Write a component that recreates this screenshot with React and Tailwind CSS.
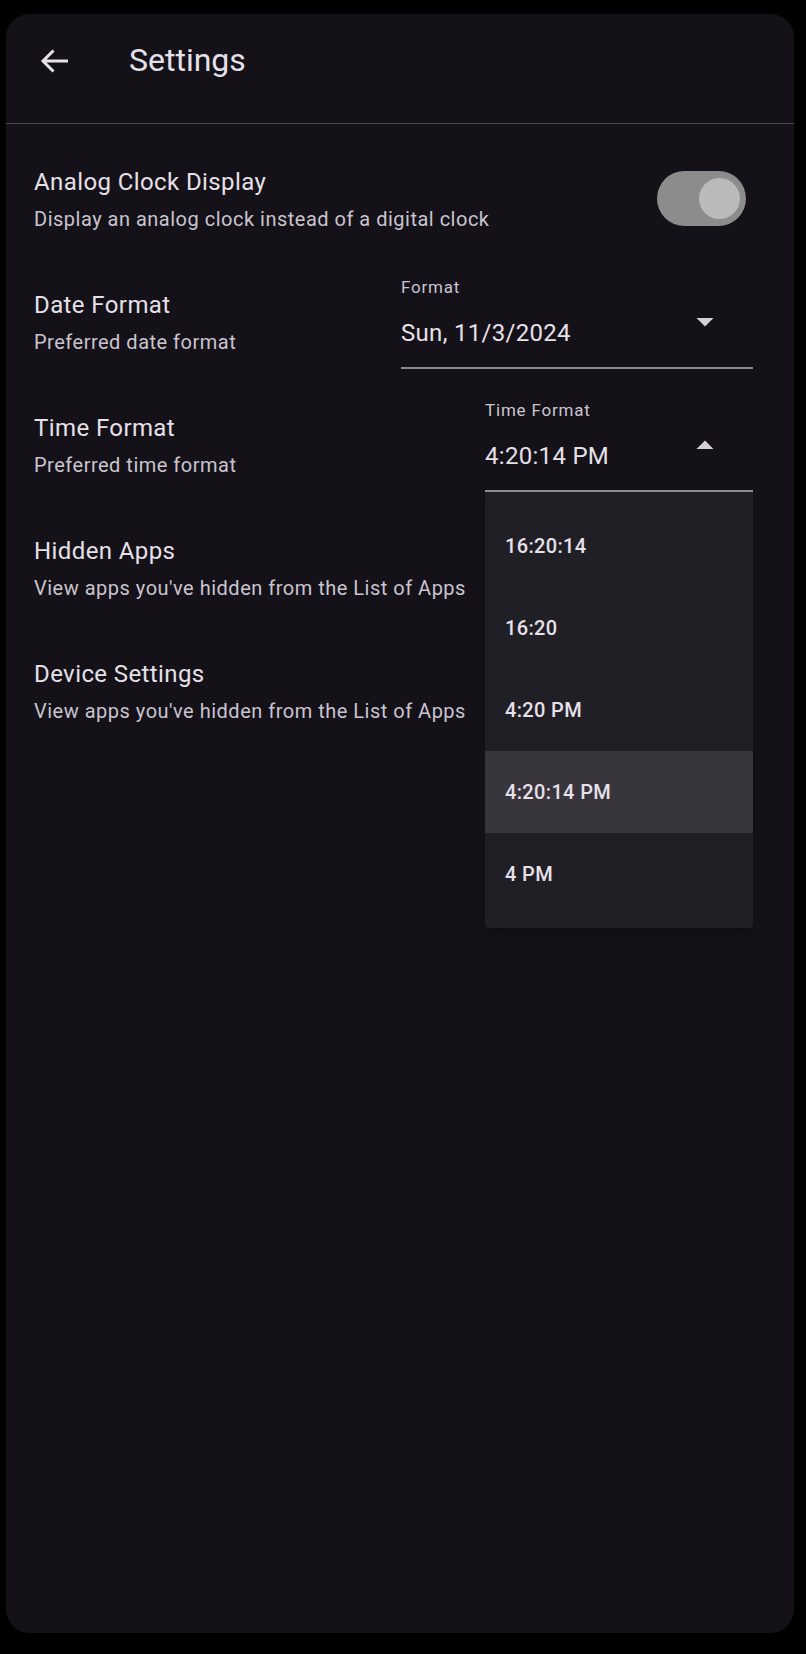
import React from 'react';

const rows = [
  { title: 'Analog Clock Display', subtitle: 'Display an analog clock instead of a digital clock', kind: 'toggle' },
  { title: 'Date Format', subtitle: 'Preferred date format', kind: 'date' },
  { title: 'Time Format', subtitle: 'Preferred time format', kind: 'time' },
  { title: 'Hidden Apps', subtitle: "View apps you've hidden from the List of Apps" },
  { title: 'Device Settings', subtitle: "View apps you've hidden from the List of Apps" },
];

const timeOptions = ['16:20:14', '16:20', '4:20 PM', '4:20:14 PM', '4 PM'];

const Caret = ({ up }) => (
  <svg width="24" height="24" viewBox="0 0 24 24" className="-mt-[9px] mr-[36px] shrink-0">
    {up ? <path d="M3.5 16 12 7.5 20.5 16z" fill="#d6d0dc" /> : <path d="M3.5 8 12 16.5 20.5 8z" fill="#d6d0dc" />}
  </svg>
);

const Select = ({ label, value, open, className }) => (
  <div className={`relative ${className}`}>
    <div className="text-[17px] leading-[20px] tracking-[0.8px] text-[#cac4d0]">{label}</div>
    <div className="mt-[22px] pb-[20px] flex items-start justify-between border-b-2 border-[#8f8c93]">
      <span className="text-[24px] leading-[28px] tracking-[0.3px] text-[#e6e0e9]">{value}</span>
      <Caret up={open} />
    </div>
    {open && (
      <div className="absolute left-0 right-0 top-full z-10 py-[13px] bg-[#211f26] rounded-b-[4px] shadow-lg">
        {timeOptions.map(opt => (
          <div
            key={opt}
            className={`h-[82px] px-5 flex items-center text-[20px] tracking-[0.35px] font-medium text-[#e6e0e9] ${opt === value ? 'bg-[#38353d]' : ''}`}
          >
            {opt}
          </div>
        ))}
      </div>
    )}
  </div>
);

const Toggle = () => (
  <div className="mr-[48px] mb-[2px] w-[89px] h-[55px] rounded-full bg-[#8c8c8c] flex items-center justify-end pr-[6px]">
    <div className="w-[41px] h-[41px] rounded-full bg-[#bababa]" />
  </div>
);

export default function App() {
  return (
    <div className="bg-black min-h-[1654px] pt-[14px] pl-[6px] pr-[12px] pb-[21px]" style={{ fontFamily: 'Roboto, "Noto Sans", sans-serif' }}>
      <div className="bg-[#141218] rounded-[24px] h-[1619px] flex flex-col">
        {/* top bar */}
        <div className="h-[110px] flex items-center border-b border-[#46444b]">
          <svg width="30" height="24" viewBox="0 0 30 24" className="ml-[34px] -mt-[16px]">
            <path d="M3 12H28M13.5 1.5 3 12l10.5 10.5" stroke="#e6e0e9" strokeWidth="3" fill="none" />
          </svg>
          <h1 className="ml-[59px] -mt-[18px] text-[32px] text-[#e6e0e9] font-normal">Settings</h1>
        </div>

        <div className="pt-[14px] pl-[28px]">
          {rows.map(row => (
            <div key={row.title} className="h-[123px] flex items-center justify-between">
              <div>
                <div className="text-[24px] leading-[30px] tracking-[0.4px] text-[#e6e0e9]">{row.title}</div>
                <div className="mt-[8px] text-[20px] leading-[28px] tracking-[0.5px] text-[#cac4d0]">{row.subtitle}</div>
              </div>
              {row.kind === 'toggle' && <Toggle />}
              {row.kind === 'date' && <Select label="Format" value="Sun, 11/3/2024" className="w-[352px] mr-[41px]" />}
              {row.kind === 'time' && <Select label="Time Format" value="4:20:14 PM" open className="w-[268px] mr-[41px]" />}
            </div>
          ))}
        </div>
      </div>
    </div>
  );
}
